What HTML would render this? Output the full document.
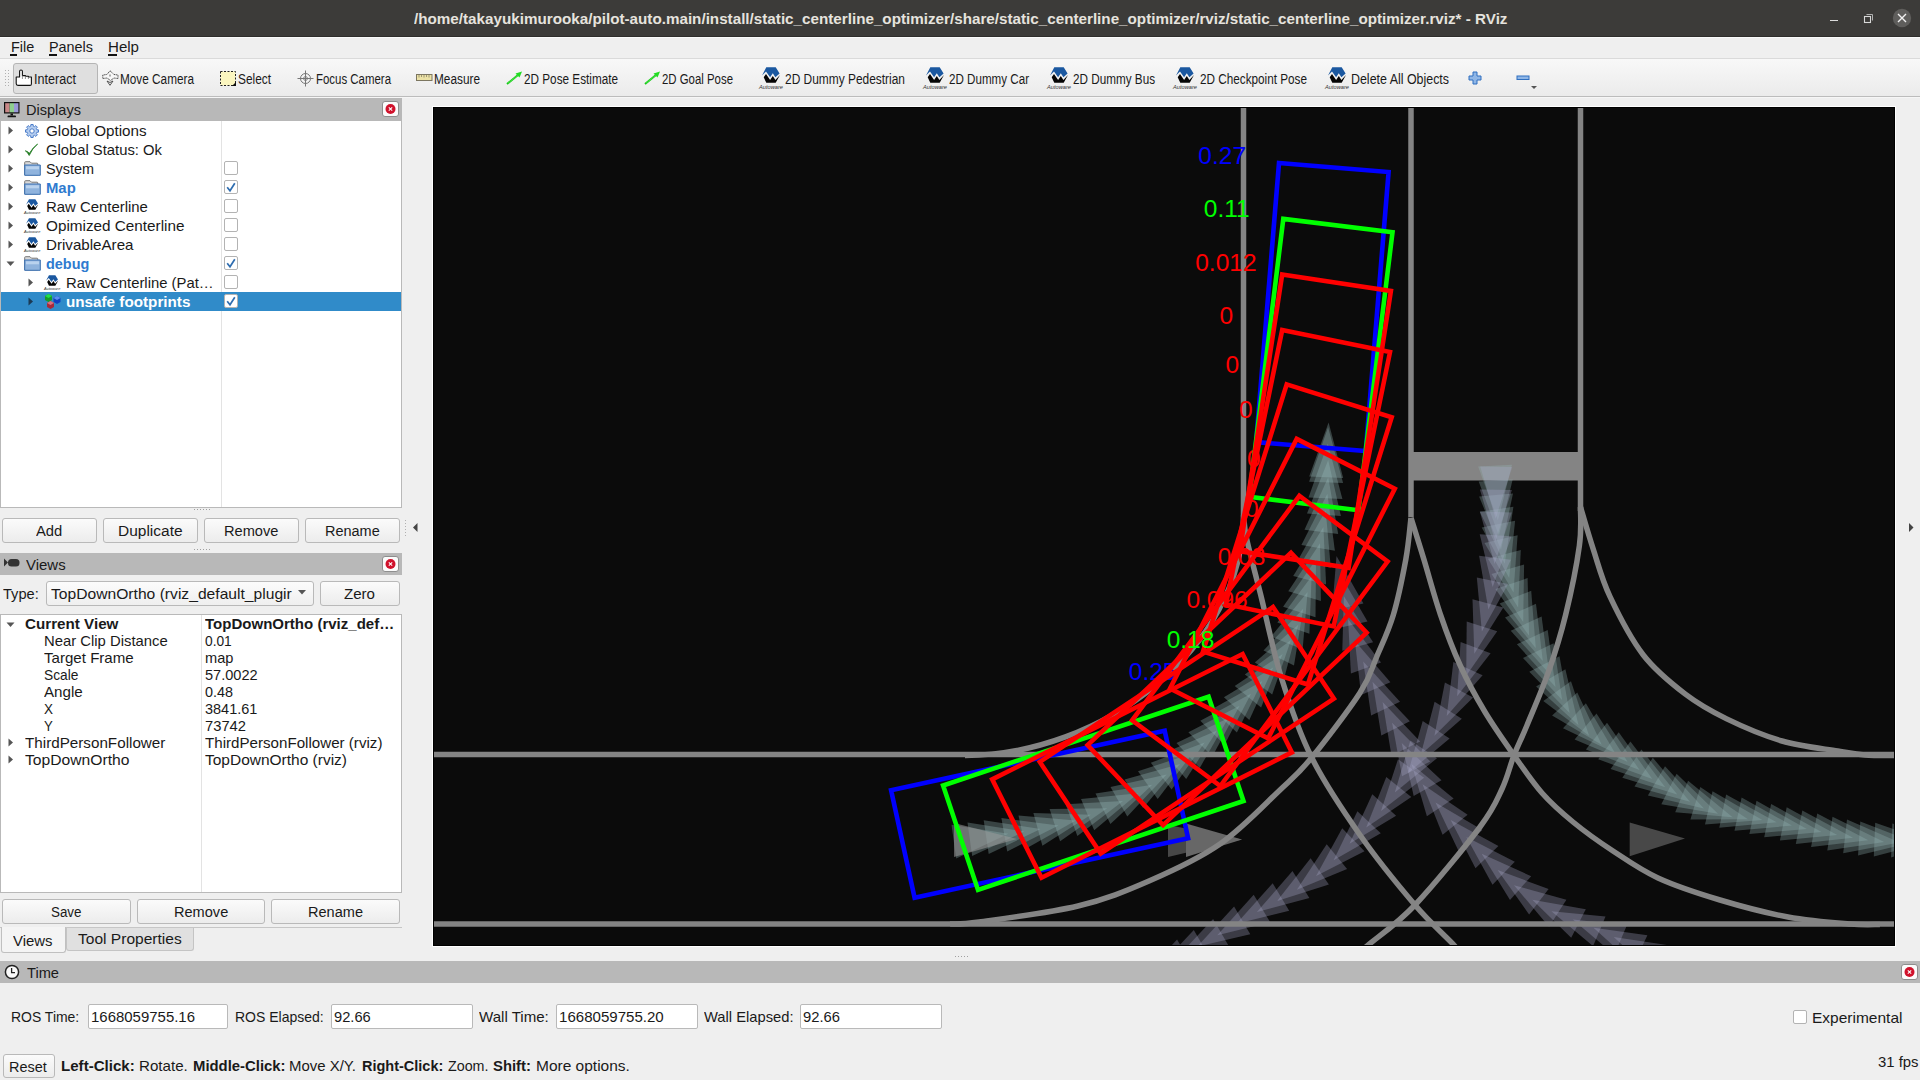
<!DOCTYPE html>
<html><head><meta charset="utf-8"><style>
*{margin:0;padding:0;box-sizing:border-box}
html,body{width:1920px;height:1080px;overflow:hidden;background:#efefef;font-family:"Liberation Sans",sans-serif}
.t{position:absolute;white-space:pre;transform-origin:0 0}
.r{position:absolute}
svg{position:absolute;overflow:visible}
</style></head><body>
<div class="r" style="left:0px;top:0px;width:1920px;height:37px;background:#3c3b39"></div>
<div class="r" style="left:0px;top:36px;width:1920px;height:1px;background:#2e2d2b"></div>
<div class="t" style="left:413.50px;top:11.18px;font-size:15.5px;line-height:15.5px;font-weight:bold;color:#e6e3de;transform:scaleX(0.9815);">/home/takayukimurooka/pilot-auto.main/install/static_centerline_optimizer/share/static_centerline_optimizer/rviz/static_centerline_optimizer.rviz* - RViz</div>
<div class="r" style="left:1830px;top:20px;width:8px;height:1.2px;background:#dcdcdc"></div>
<svg style="left:1860px;top:10px" width="16" height="16" viewBox="0 0 16 16"><rect x="4.5" y="6.5" width="6" height="6" fill="none" stroke="#d8d8d8" stroke-width="1.1"/><path d="M6.5 4.5 L12.5 4.5 L12.5 10.5" fill="none" stroke="#bdbdbd" stroke-width="0.9"/></svg>
<svg style="left:1892px;top:8px" width="20" height="20" viewBox="0 0 20 20"><circle cx="10" cy="10" r="9.2" fill="#5f5e5c"/><path d="M6 6 L14 14 M14 6 L6 14" stroke="#f2f2f2" stroke-width="1.4"/></svg>
<div class="r" style="left:0px;top:37px;width:1920px;height:1px;background:#fafafa"></div>
<div class="r" style="left:0px;top:38px;width:1920px;height:20px;background:#efefef"></div>
<div class="r" style="left:0px;top:58px;width:1920px;height:1px;background:#dadada"></div>
<div class="t" style="left:10.50px;top:40.32px;font-size:14.5px;line-height:14.5px;color:#1a1a1a;transform:scaleX(0.9951);">File</div>
<div class="r" style="left:10px;top:54px;width:7px;height:1.6px;background:#111"></div>
<div class="t" style="left:49.00px;top:40.32px;font-size:14.5px;line-height:14.5px;color:#1a1a1a;transform:scaleX(0.9924);">Panels</div>
<div class="r" style="left:49px;top:54px;width:8px;height:1.6px;background:#111"></div>
<div class="t" style="left:108.00px;top:40.32px;font-size:14.5px;line-height:14.5px;color:#1a1a1a;transform:scaleX(1.0395);">Help</div>
<div class="r" style="left:108px;top:54px;width:9px;height:1.6px;background:#111"></div>
<div class="r" style="left:0px;top:59px;width:1920px;height:37px;background:linear-gradient(#f8f8f8,#ebebeb)"></div>
<div class="r" style="left:0px;top:96px;width:1920px;height:1px;background:#bcbcbc"></div>
<div class="r" style="left:0px;top:97px;width:1920px;height:1px;background:#f6f6f6"></div>
<div class="r" style="left:5px;top:70px;width:1px;height:1px;background:#b0b0b0"></div>
<div class="r" style="left:8px;top:70px;width:1px;height:1px;background:#b0b0b0"></div>
<div class="r" style="left:5px;top:73px;width:1px;height:1px;background:#b0b0b0"></div>
<div class="r" style="left:8px;top:73px;width:1px;height:1px;background:#b0b0b0"></div>
<div class="r" style="left:5px;top:76px;width:1px;height:1px;background:#b0b0b0"></div>
<div class="r" style="left:8px;top:76px;width:1px;height:1px;background:#b0b0b0"></div>
<div class="r" style="left:5px;top:79px;width:1px;height:1px;background:#b0b0b0"></div>
<div class="r" style="left:8px;top:79px;width:1px;height:1px;background:#b0b0b0"></div>
<div class="r" style="left:5px;top:82px;width:1px;height:1px;background:#b0b0b0"></div>
<div class="r" style="left:8px;top:82px;width:1px;height:1px;background:#b0b0b0"></div>
<div class="r" style="left:5px;top:85px;width:1px;height:1px;background:#b0b0b0"></div>
<div class="r" style="left:8px;top:85px;width:1px;height:1px;background:#b0b0b0"></div>
<div class="r" style="left:13px;top:63px;width:84.5px;height:30.5px;background:#dfdfdf;border:1px solid #b5b5b5;border-radius:3px"></div>
<svg style="left:0;top:0" width="40" height="96" viewBox="0 0 40 96"><path d="M19.6 77 L19.6 71.2 Q19.6 70 21 70 Q22.4 70 22.4 71.2 L22.4 75.6 L25.4 75.6 L25.4 76.2 L28.4 76.2 L28.4 77 L31.4 77 L31.4 84 Q31.4 85.4 30 85.4 L18 85.4 Q16.2 85.4 16.2 83.6 L16.2 77 Z" fill="#fff" stroke="#111" stroke-width="1.1" stroke-linejoin="round"/><path d="M22.4 75.6 L22.4 79 M25.4 76.2 L25.4 79 M28.4 77 L28.4 79" stroke="#777" stroke-width="0.8"/></svg>
<div class="t" style="left:34.00px;top:72.05px;font-size:14px;line-height:14px;color:#1a1a1a;transform:scaleX(0.8996);">Interact</div>
<svg style="left:102px;top:70px" width="17" height="17" viewBox="0 0 17 17"><path d="M8 0.8 L12 4.5 L16 5 L16 8.5 L12 8 L8.5 10.5 L5 8 L0.8 8.5 L0.8 5 L5 4.5 Z" fill="#f7f7f7" stroke="#333" stroke-width="0.9" stroke-dasharray="1.2 0.6"/><path d="M5 11 L8 15.3 L11 11 L8 12.5Z" fill="#f7f7f7" stroke="#444" stroke-width="0.9"/><rect x="7" y="4.5" width="2" height="2" fill="#aaa"/></svg>
<div class="t" style="left:120.00px;top:72.05px;font-size:14px;line-height:14px;color:#1a1a1a;transform:scaleX(0.8417);">Move Camera</div>
<svg style="left:220px;top:71px" width="17" height="16" viewBox="0 0 17 16"><rect x="0.5" y="0.5" width="15" height="14" fill="#fbf6c0" stroke="#222" stroke-width="1" stroke-dasharray="2 1.5"/><path d="M12 15 L16 15 L16 11Z" fill="#111"/></svg>
<div class="t" style="left:238.00px;top:72.05px;font-size:14px;line-height:14px;color:#1a1a1a;transform:scaleX(0.8481);">Select</div>
<svg style="left:297px;top:70px" width="17" height="17" viewBox="0 0 17 17"><circle cx="8.5" cy="8.5" r="5" fill="#f3f3f3" stroke="#777" stroke-width="1"/><circle cx="8.5" cy="8.5" r="2" fill="none" stroke="#777" stroke-width="0.8"/><path d="M8.5 0.5 L8.5 16.5 M0.5 8.5 L16.5 8.5" stroke="#777" stroke-width="1"/></svg>
<div class="t" style="left:316.00px;top:72.05px;font-size:14px;line-height:14px;color:#1a1a1a;transform:scaleX(0.8169);">Focus Camera</div>
<svg style="left:416px;top:74px" width="17" height="8" viewBox="0 0 17 8"><rect x="0.5" y="0.5" width="15.5" height="6" fill="#ece2a6" stroke="#7c7660" stroke-width="1"/><path d="M3 1 L3 3.5 M5.5 1 L5.5 3 M8 1 L8 3.5 M10.5 1 L10.5 3 M13 1 L13 3.5" stroke="#7c7660" stroke-width="0.7"/></svg>
<div class="t" style="left:434.00px;top:72.05px;font-size:14px;line-height:14px;color:#1a1a1a;transform:scaleX(0.8445);">Measure</div>
<svg style="left:506px;top:70px" width="17" height="16" viewBox="0 0 17 16"><path d="M1 14 L12 5" stroke="#18c818" stroke-width="2"/><path d="M16 1.5 L9.5 3.5 L13.5 7.5Z" fill="#22dd22"/><path d="M2 13.2 L11.5 5.5" stroke="#55f055" stroke-width="0.7"/></svg>
<svg style="left:644px;top:70px" width="17" height="16" viewBox="0 0 17 16"><path d="M1 14 L12 5" stroke="#18c818" stroke-width="2"/><path d="M16 1.5 L9.5 3.5 L13.5 7.5Z" fill="#22dd22"/><path d="M2 13.2 L11.5 5.5" stroke="#55f055" stroke-width="0.7"/></svg>
<div class="t" style="left:524.00px;top:72.05px;font-size:14px;line-height:14px;color:#1a1a1a;transform:scaleX(0.8389);">2D Pose Estimate</div>
<div class="t" style="left:662.00px;top:72.05px;font-size:14px;line-height:14px;color:#1a1a1a;transform:scaleX(0.8146);">2D Goal Pose</div>
<svg style="left:759px;top:67px" width="24.0" height="22.0" viewBox="4 5 24 22">
<path d="M11.3 5.3 L20.7 5.3 L24.6 11.6 L20.4 15.3 L17.8 11.3 L15.1 15.3 L11 9.5 L7 13.4Z" fill="#1b58a0"/>
<path d="M8.7 15.3 L11 12.1 L15.1 17.9 L17.8 13.9 L20.4 17.9 L25 12.9 L20.7 20.7 L11.3 20.7Z" fill="#050505"/>
<text x="4" y="27" font-size="6" font-style="italic" textLength="24" lengthAdjust="spacingAndGlyphs" fill="#333" font-family="Liberation Sans">Autoware</text>
</svg>
<div class="t" style="left:785.00px;top:72.05px;font-size:14px;line-height:14px;color:#1a1a1a;transform:scaleX(0.8521);">2D Dummy Pedestrian</div>
<svg style="left:923px;top:67px" width="24.0" height="22.0" viewBox="4 5 24 22">
<path d="M11.3 5.3 L20.7 5.3 L24.6 11.6 L20.4 15.3 L17.8 11.3 L15.1 15.3 L11 9.5 L7 13.4Z" fill="#1b58a0"/>
<path d="M8.7 15.3 L11 12.1 L15.1 17.9 L17.8 13.9 L20.4 17.9 L25 12.9 L20.7 20.7 L11.3 20.7Z" fill="#050505"/>
<text x="4" y="27" font-size="6" font-style="italic" textLength="24" lengthAdjust="spacingAndGlyphs" fill="#333" font-family="Liberation Sans">Autoware</text>
</svg>
<div class="t" style="left:949.00px;top:72.05px;font-size:14px;line-height:14px;color:#1a1a1a;transform:scaleX(0.8294);">2D Dummy Car</div>
<svg style="left:1047px;top:67px" width="24.0" height="22.0" viewBox="4 5 24 22">
<path d="M11.3 5.3 L20.7 5.3 L24.6 11.6 L20.4 15.3 L17.8 11.3 L15.1 15.3 L11 9.5 L7 13.4Z" fill="#1b58a0"/>
<path d="M8.7 15.3 L11 12.1 L15.1 17.9 L17.8 13.9 L20.4 17.9 L25 12.9 L20.7 20.7 L11.3 20.7Z" fill="#050505"/>
<text x="4" y="27" font-size="6" font-style="italic" textLength="24" lengthAdjust="spacingAndGlyphs" fill="#333" font-family="Liberation Sans">Autoware</text>
</svg>
<div class="t" style="left:1073.00px;top:72.05px;font-size:14px;line-height:14px;color:#1a1a1a;transform:scaleX(0.8365);">2D Dummy Bus</div>
<svg style="left:1173px;top:67px" width="24.0" height="22.0" viewBox="4 5 24 22">
<path d="M11.3 5.3 L20.7 5.3 L24.6 11.6 L20.4 15.3 L17.8 11.3 L15.1 15.3 L11 9.5 L7 13.4Z" fill="#1b58a0"/>
<path d="M8.7 15.3 L11 12.1 L15.1 17.9 L17.8 13.9 L20.4 17.9 L25 12.9 L20.7 20.7 L11.3 20.7Z" fill="#050505"/>
<text x="4" y="27" font-size="6" font-style="italic" textLength="24" lengthAdjust="spacingAndGlyphs" fill="#333" font-family="Liberation Sans">Autoware</text>
</svg>
<div class="t" style="left:1200.00px;top:72.05px;font-size:14px;line-height:14px;color:#1a1a1a;transform:scaleX(0.8384);">2D Checkpoint Pose</div>
<svg style="left:1325px;top:67px" width="24.0" height="22.0" viewBox="4 5 24 22">
<path d="M11.3 5.3 L20.7 5.3 L24.6 11.6 L20.4 15.3 L17.8 11.3 L15.1 15.3 L11 9.5 L7 13.4Z" fill="#1b58a0"/>
<path d="M8.7 15.3 L11 12.1 L15.1 17.9 L17.8 13.9 L20.4 17.9 L25 12.9 L20.7 20.7 L11.3 20.7Z" fill="#050505"/>
<text x="4" y="27" font-size="6" font-style="italic" textLength="24" lengthAdjust="spacingAndGlyphs" fill="#333" font-family="Liberation Sans">Autoware</text>
</svg>
<div class="t" style="left:1351.00px;top:72.05px;font-size:14px;line-height:14px;color:#1a1a1a;transform:scaleX(0.8869);">Delete All Objects</div>
<svg style="left:1468px;top:71px" width="14" height="14" viewBox="0 0 14 14"><path d="M5 1 L9 1 L9 5 L13 5 L13 9 L9 9 L9 13 L5 13 L5 9 L1 9 L1 5 L5 5Z" fill="#8fb6e6" stroke="#2f6fc0" stroke-width="1"/></svg>
<svg style="left:1516px;top:75px" width="14" height="6" viewBox="0 0 14 6"><rect x="1" y="1" width="12" height="3.5" fill="#8fb6e6" stroke="#2f6fc0" stroke-width="1"/></svg>
<svg style="left:1531px;top:86px" width="6" height="4" viewBox="0 0 6 4"><path d="M0 0 L6 0 L3 3Z" fill="#555"/></svg>
<div class="r" style="left:0px;top:98px;width:402px;height:23px;background:#b8b8b8"></div>
<svg style="left:3px;top:101px" width="18" height="18" viewBox="0 0 18 18"><rect x="1" y="1" width="15.5" height="11.5" fill="#111"/><rect x="2.2" y="2.2" width="4.4" height="9.1" fill="#c98888"/><rect x="6.6" y="2.2" width="4.4" height="9.1" fill="#8fcf8f"/><rect x="11" y="2.2" width="4.4" height="9.1" fill="#9a9ad8"/><rect x="7.5" y="12.5" width="2.5" height="2" fill="#111"/><rect x="4.5" y="14.5" width="8.5" height="1.8" rx="0.9" fill="#111"/></svg>
<div class="t" style="left:26.00px;top:102.92px;font-size:14.5px;line-height:14.5px;color:#1a1a1a;transform:scaleX(1.0038);">Displays</div>
<svg style="left:382px;top:101px" width="17" height="16" viewBox="0 0 17 16">
<rect x="0.5" y="0.5" width="16" height="15" rx="2.5" fill="#fbfbfb" stroke="#8e8e8e"/>
<circle cx="8.5" cy="8" r="5" fill="#d0112b"/>
<path d="M6.8 6.3 L10.2 9.7 M10.2 6.3 L6.8 9.7" stroke="#fff" stroke-width="1.05"/>
</svg>
<div class="r" style="left:0px;top:121px;width:402px;height:387px;background:#fff;border:1px solid #b9b9b9;border-top:none"></div>
<div class="r" style="left:221px;top:121px;width:1px;height:386px;background:#e3e3e3"></div>
<svg style="left:8px;top:126px" width="6" height="9" viewBox="0 0 6 9"><path d="M0.5 0.5 L5 4.5 L0.5 8.5Z" fill="#555"/></svg>
<svg style="left:24px;top:123px" width="16" height="16" viewBox="0 0 16 16"><path d="M12.83 6.72 L14.50 6.87 L14.50 9.13 L12.83 9.28 L12.32 10.51 L13.40 11.80 L11.80 13.40 L10.51 12.32 L9.28 12.83 L9.13 14.50 L6.87 14.50 L6.72 12.83 L5.49 12.32 L4.20 13.40 L2.60 11.80 L3.68 10.51 L3.17 9.28 L1.50 9.13 L1.50 6.87 L3.17 6.72 L3.68 5.49 L2.60 4.20 L4.20 2.60 L5.49 3.68 L6.72 3.17 L6.87 1.50 L9.13 1.50 L9.28 3.17 L10.51 3.68 L11.80 2.60 L13.40 4.20 L12.32 5.49Z" fill="#b5cdef" stroke="#3c72c4" stroke-width="0.9" stroke-linejoin="round"/><circle cx="8" cy="8" r="2.2" fill="#fff" stroke="#3c72c4" stroke-width="0.9"/></svg>
<div class="t" style="left:46.40px;top:123.72px;font-size:14.5px;line-height:14.5px;color:#1a1a1a;transform:scaleX(1.0488);">Global Options</div>
<svg style="left:8px;top:145px" width="6" height="9" viewBox="0 0 6 9"><path d="M0.5 0.5 L5 4.5 L0.5 8.5Z" fill="#555"/></svg>
<svg style="left:24px;top:142px" width="16" height="16" viewBox="0 0 16 16"><path d="M1.3 8.8 Q3.5 10 5.2 13.5 Q8.5 6 13.6 2 Q8.8 5.5 5.4 11.3 Q4 9.3 1.3 8.8Z" fill="#1f7a1f" stroke="#1f7a1f" stroke-width="0.8" stroke-linejoin="round"/></svg>
<div class="t" style="left:46.40px;top:142.72px;font-size:14.5px;line-height:14.5px;color:#1a1a1a;transform:scaleX(1.0199);">Global Status: Ok</div>
<svg style="left:8px;top:164px" width="6" height="9" viewBox="0 0 6 9"><path d="M0.5 0.5 L5 4.5 L0.5 8.5Z" fill="#555"/></svg>
<svg style="left:24px;top:161px" width="17" height="15" viewBox="0 0 17 15">
<path d="M0.7 1.5 Q0.7 0.7 1.5 0.7 L6 0.7 L7.5 2.2 L13 2.2 Q13.8 2.2 13.8 3 L13.8 13.8 L0.7 13.8 Z" fill="#d9d9d9" stroke="#777" stroke-width="1"/>
<path d="M0.7 4 L16.3 4 L16.3 14.3 L0.7 14.3 Z" fill="#8fb3dd" stroke="#3a6fb0" stroke-width="1"/>
<rect x="2" y="5.3" width="13" height="3" fill="#b9d2ee"/>
</svg>
<div class="t" style="left:46.40px;top:161.72px;font-size:14.5px;line-height:14.5px;color:#1a1a1a;transform:scaleX(0.9950);">System</div>
<div class="r" style="left:224px;top:161px;width:14px;height:14px;background:#fff;border:1px solid #b3b3b3;border-radius:2px"></div>
<svg style="left:8px;top:183px" width="6" height="9" viewBox="0 0 6 9"><path d="M0.5 0.5 L5 4.5 L0.5 8.5Z" fill="#555"/></svg>
<svg style="left:24px;top:180px" width="17" height="15" viewBox="0 0 17 15">
<path d="M0.7 1.5 Q0.7 0.7 1.5 0.7 L6 0.7 L7.5 2.2 L13 2.2 Q13.8 2.2 13.8 3 L13.8 13.8 L0.7 13.8 Z" fill="#d9d9d9" stroke="#777" stroke-width="1"/>
<path d="M0.7 4 L16.3 4 L16.3 14.3 L0.7 14.3 Z" fill="#8fb3dd" stroke="#3a6fb0" stroke-width="1"/>
<rect x="2" y="5.3" width="13" height="3" fill="#b9d2ee"/>
</svg>
<div class="t" style="left:46.40px;top:180.72px;font-size:14.5px;line-height:14.5px;font-weight:bold;color:#2f7bcf;transform:scaleX(1.0241);">Map</div>
<div class="r" style="left:224px;top:180px;width:14px;height:14px;background:#fff;border:1px solid #b3b3b3;border-radius:2px"></div>
<svg style="left:224px;top:180px" width="14" height="14" viewBox="0 0 14 14"><path d="M3.2 7.2 L6 10.8 L10.8 3.2" fill="none" stroke="#2e6db0" stroke-width="1.7"/></svg>
<svg style="left:8px;top:202px" width="6" height="9" viewBox="0 0 6 9"><path d="M0.5 0.5 L5 4.5 L0.5 8.5Z" fill="#555"/></svg>
<svg style="left:24px;top:199px" width="16.3" height="15.0" viewBox="4 5 24 22">
<path d="M11.3 5.3 L20.7 5.3 L24.6 11.6 L20.4 15.3 L17.8 11.3 L15.1 15.3 L11 9.5 L7 13.4Z" fill="#1b58a0"/>
<path d="M8.7 15.3 L11 12.1 L15.1 17.9 L17.8 13.9 L20.4 17.9 L25 12.9 L20.7 20.7 L11.3 20.7Z" fill="#050505"/>
<text x="4" y="27" font-size="6" font-style="italic" textLength="24" lengthAdjust="spacingAndGlyphs" fill="#333" font-family="Liberation Sans">Autoware</text>
</svg>
<div class="t" style="left:46.40px;top:199.72px;font-size:14.5px;line-height:14.5px;color:#1a1a1a;transform:scaleX(1.0279);">Raw Centerline</div>
<div class="r" style="left:224px;top:199px;width:14px;height:14px;background:#fff;border:1px solid #b3b3b3;border-radius:2px"></div>
<svg style="left:8px;top:221px" width="6" height="9" viewBox="0 0 6 9"><path d="M0.5 0.5 L5 4.5 L0.5 8.5Z" fill="#555"/></svg>
<svg style="left:24px;top:218px" width="16.3" height="15.0" viewBox="4 5 24 22">
<path d="M11.3 5.3 L20.7 5.3 L24.6 11.6 L20.4 15.3 L17.8 11.3 L15.1 15.3 L11 9.5 L7 13.4Z" fill="#1b58a0"/>
<path d="M8.7 15.3 L11 12.1 L15.1 17.9 L17.8 13.9 L20.4 17.9 L25 12.9 L20.7 20.7 L11.3 20.7Z" fill="#050505"/>
<text x="4" y="27" font-size="6" font-style="italic" textLength="24" lengthAdjust="spacingAndGlyphs" fill="#333" font-family="Liberation Sans">Autoware</text>
</svg>
<div class="t" style="left:46.40px;top:218.72px;font-size:14.5px;line-height:14.5px;color:#1a1a1a;transform:scaleX(1.0543);">Opimized Centerline</div>
<div class="r" style="left:224px;top:218px;width:14px;height:14px;background:#fff;border:1px solid #b3b3b3;border-radius:2px"></div>
<svg style="left:8px;top:240px" width="6" height="9" viewBox="0 0 6 9"><path d="M0.5 0.5 L5 4.5 L0.5 8.5Z" fill="#555"/></svg>
<svg style="left:24px;top:237px" width="16.3" height="15.0" viewBox="4 5 24 22">
<path d="M11.3 5.3 L20.7 5.3 L24.6 11.6 L20.4 15.3 L17.8 11.3 L15.1 15.3 L11 9.5 L7 13.4Z" fill="#1b58a0"/>
<path d="M8.7 15.3 L11 12.1 L15.1 17.9 L17.8 13.9 L20.4 17.9 L25 12.9 L20.7 20.7 L11.3 20.7Z" fill="#050505"/>
<text x="4" y="27" font-size="6" font-style="italic" textLength="24" lengthAdjust="spacingAndGlyphs" fill="#333" font-family="Liberation Sans">Autoware</text>
</svg>
<div class="t" style="left:46.40px;top:237.72px;font-size:14.5px;line-height:14.5px;color:#1a1a1a;transform:scaleX(1.0439);">DrivableArea</div>
<div class="r" style="left:224px;top:237px;width:14px;height:14px;background:#fff;border:1px solid #b3b3b3;border-radius:2px"></div>
<svg style="left:6px;top:261px" width="9" height="6" viewBox="0 0 9 6"><path d="M0.5 0.5 L8.5 0.5 L4.5 5Z" fill="#555"/></svg>
<svg style="left:24px;top:256px" width="17" height="15" viewBox="0 0 17 15">
<path d="M0.7 1.5 Q0.7 0.7 1.5 0.7 L6 0.7 L7.5 2.2 L13 2.2 Q13.8 2.2 13.8 3 L13.8 13.8 L0.7 13.8 Z" fill="#d9d9d9" stroke="#777" stroke-width="1"/>
<path d="M0.7 4 L16.3 4 L16.3 14.3 L0.7 14.3 Z" fill="#8fb3dd" stroke="#3a6fb0" stroke-width="1"/>
<rect x="2" y="5.3" width="13" height="3" fill="#b9d2ee"/>
</svg>
<div class="t" style="left:46.40px;top:256.72px;font-size:14.5px;line-height:14.5px;font-weight:bold;color:#2f7bcf;transform:scaleX(0.9955);">debug</div>
<div class="r" style="left:224px;top:256px;width:14px;height:14px;background:#fff;border:1px solid #b3b3b3;border-radius:2px"></div>
<svg style="left:224px;top:256px" width="14" height="14" viewBox="0 0 14 14"><path d="M3.2 7.2 L6 10.8 L10.8 3.2" fill="none" stroke="#2e6db0" stroke-width="1.7"/></svg>
<svg style="left:28px;top:278px" width="6" height="9" viewBox="0 0 6 9"><path d="M0.5 0.5 L5 4.5 L0.5 8.5Z" fill="#555"/></svg>
<svg style="left:44px;top:275px" width="16.3" height="15.0" viewBox="4 5 24 22">
<path d="M11.3 5.3 L20.7 5.3 L24.6 11.6 L20.4 15.3 L17.8 11.3 L15.1 15.3 L11 9.5 L7 13.4Z" fill="#1b58a0"/>
<path d="M8.7 15.3 L11 12.1 L15.1 17.9 L17.8 13.9 L20.4 17.9 L25 12.9 L20.7 20.7 L11.3 20.7Z" fill="#050505"/>
<text x="4" y="27" font-size="6" font-style="italic" textLength="24" lengthAdjust="spacingAndGlyphs" fill="#333" font-family="Liberation Sans">Autoware</text>
</svg>
<div class="t" style="left:66.40px;top:275.72px;font-size:14.5px;line-height:14.5px;color:#1a1a1a;transform:scaleX(1.0232);">Raw Centerline (Pat…</div>
<div class="r" style="left:224px;top:275px;width:14px;height:14px;background:#fff;border:1px solid #b3b3b3;border-radius:2px"></div>
<div class="r" style="left:1px;top:292px;width:400px;height:19px;background:#308bc9"></div>
<svg style="left:28px;top:297px" width="6" height="9" viewBox="0 0 6 9"><path d="M0.5 0.5 L5 4.5 L0.5 8.5Z" fill="#1b3a55"/></svg>
<svg style="left:44px;top:293px" width="17" height="18" viewBox="0 0 17 18">
<path d="M1 3 L4.5 1 L8 3 L8 7 L4.5 9 L1 7Z" fill="#159a2a"/><path d="M1 3 L4.5 1 L8 3 L4.5 5Z" fill="#1fe04a"/>
<path d="M9.5 5 L13 3 L16.5 5 L16.5 9 L13 11 L9.5 9Z" fill="#1040c0"/><path d="M9.5 5 L13 3 L16.5 5 L13 7Z" fill="#5a8ef0"/>
<path d="M3 10 L6.5 8 L10 10 L10 14 L6.5 16 L3 14Z" fill="#a82a3a"/><path d="M3 10 L6.5 8 L10 10 L6.5 12Z" fill="#d87080"/>
</svg>
<div class="t" style="left:66.40px;top:294.72px;font-size:14.5px;line-height:14.5px;font-weight:bold;color:#ffffff;transform:scaleX(1.0505);">unsafe footprints</div>
<div class="r" style="left:224px;top:294px;width:14px;height:14px;background:#fff;border:1px solid #b3b3b3;border-radius:2px"></div>
<svg style="left:224px;top:294px" width="14" height="14" viewBox="0 0 14 14"><path d="M3.2 7.2 L6 10.8 L10.8 3.2" fill="none" stroke="#2e6db0" stroke-width="1.7"/></svg>
<div class="r" style="left:194px;top:509px;width:1px;height:1px;background:#a0a0a0"></div>
<div class="r" style="left:197px;top:509px;width:1px;height:1px;background:#a0a0a0"></div>
<div class="r" style="left:200px;top:509px;width:1px;height:1px;background:#a0a0a0"></div>
<div class="r" style="left:203px;top:509px;width:1px;height:1px;background:#a0a0a0"></div>
<div class="r" style="left:206px;top:509px;width:1px;height:1px;background:#a0a0a0"></div>
<div class="r" style="left:209px;top:509px;width:1px;height:1px;background:#a0a0a0"></div>
<div class="r" style="left:2px;top:518px;width:95px;height:25px;background:linear-gradient(#fbfbfb,#ececec);border:1px solid #b9b9b9;border-radius:3px"></div>
<div class="t" style="left:36.00px;top:524.15px;font-size:14px;line-height:14px;color:#1a1a1a;transform:scaleX(1.0557);">Add</div>
<div class="r" style="left:103px;top:518px;width:95px;height:25px;background:linear-gradient(#fbfbfb,#ececec);border:1px solid #b9b9b9;border-radius:3px"></div>
<div class="t" style="left:118.00px;top:524.15px;font-size:14px;line-height:14px;color:#1a1a1a;transform:scaleX(1.1068);">Duplicate</div>
<div class="r" style="left:204px;top:518px;width:95px;height:25px;background:linear-gradient(#fbfbfb,#ececec);border:1px solid #b9b9b9;border-radius:3px"></div>
<div class="t" style="left:224.00px;top:524.15px;font-size:14px;line-height:14px;color:#1a1a1a;transform:scaleX(1.0435);">Remove</div>
<div class="r" style="left:305px;top:518px;width:95px;height:25px;background:linear-gradient(#fbfbfb,#ececec);border:1px solid #b9b9b9;border-radius:3px"></div>
<div class="t" style="left:325.00px;top:524.15px;font-size:14px;line-height:14px;color:#1a1a1a;transform:scaleX(1.0337);">Rename</div>
<div class="r" style="left:194px;top:549px;width:1px;height:1px;background:#a0a0a0"></div>
<div class="r" style="left:197px;top:549px;width:1px;height:1px;background:#a0a0a0"></div>
<div class="r" style="left:200px;top:549px;width:1px;height:1px;background:#a0a0a0"></div>
<div class="r" style="left:203px;top:549px;width:1px;height:1px;background:#a0a0a0"></div>
<div class="r" style="left:206px;top:549px;width:1px;height:1px;background:#a0a0a0"></div>
<div class="r" style="left:209px;top:549px;width:1px;height:1px;background:#a0a0a0"></div>
<div class="r" style="left:405px;top:520px;width:1px;height:1px;background:#b0b0b0"></div>
<div class="r" style="left:405px;top:523px;width:1px;height:1px;background:#b0b0b0"></div>
<div class="r" style="left:405px;top:526px;width:1px;height:1px;background:#b0b0b0"></div>
<div class="r" style="left:405px;top:529px;width:1px;height:1px;background:#b0b0b0"></div>
<div class="r" style="left:405px;top:532px;width:1px;height:1px;background:#b0b0b0"></div>
<div class="r" style="left:405px;top:535px;width:1px;height:1px;background:#b0b0b0"></div>
<svg style="left:413px;top:523px" width="5" height="9" viewBox="0 0 5 9"><path d="M4.5 0 L0 4.5 L4.5 9Z" fill="#444"/></svg>
<svg style="left:1909px;top:523px" width="5" height="9" viewBox="0 0 5 9"><path d="M0 0 L4.5 4.5 L0 9Z" fill="#444"/></svg>
<div class="r" style="left:0px;top:553px;width:402px;height:22px;background:#b8b8b8"></div>
<svg style="left:3px;top:557px" width="18" height="12" viewBox="0 0 18 12"><path d="M1 1.5 L5 5.5 L1 9.5Z" fill="#333"/><rect x="5" y="2" width="11.5" height="7.5" rx="3.5" fill="#333"/></svg>
<div class="t" style="left:26.40px;top:557.52px;font-size:14.5px;line-height:14.5px;color:#1a1a1a;transform:scaleX(1.0308);">Views</div>
<svg style="left:382px;top:556px" width="17" height="16" viewBox="0 0 17 16">
<rect x="0.5" y="0.5" width="16" height="15" rx="2.5" fill="#fbfbfb" stroke="#8e8e8e"/>
<circle cx="8.5" cy="8" r="5" fill="#d0112b"/>
<path d="M6.8 6.3 L10.2 9.7 M10.2 6.3 L6.8 9.7" stroke="#fff" stroke-width="1.05"/>
</svg>
<div class="t" style="left:2.75px;top:586.92px;font-size:14.5px;line-height:14.5px;color:#1a1a1a;transform:scaleX(1.0080);">Type:</div>
<div class="r" style="left:45.5px;top:581px;width:268px;height:25px;background:linear-gradient(#fcfcfc,#efefef);border:1px solid #b9b9b9;border-radius:3px"></div>
<div class="t" style="left:50.90px;top:586.92px;font-size:14.5px;line-height:14.5px;color:#1a1a1a;transform:scaleX(1.0786);">TopDownOrtho (rviz_default_plugir</div>
<svg style="left:298px;top:590px" width="8" height="5" viewBox="0 0 8 5"><path d="M0 0 L8 0 L4 4.5Z" fill="#555"/></svg>
<div class="r" style="left:320px;top:581px;width:80px;height:25px;background:linear-gradient(#fbfbfb,#ececec);border:1px solid #b9b9b9;border-radius:3px"></div>
<div class="t" style="left:344.00px;top:587.35px;font-size:14px;line-height:14px;color:#1a1a1a;transform:scaleX(1.0769);">Zero</div>
<div class="r" style="left:0px;top:614px;width:402px;height:279px;background:#fff;border:1px solid #b9b9b9"></div>
<div class="r" style="left:201px;top:615px;width:1px;height:277px;background:#e3e3e3"></div>
<svg style="left:6px;top:622px" width="9" height="6" viewBox="0 0 9 6"><path d="M0.5 0.5 L8.5 0.5 L4.5 5Z" fill="#555"/></svg>
<div class="t" style="left:24.50px;top:616.78px;font-size:14.2px;line-height:14.2px;font-weight:bold;color:#1a1a1a;transform:scaleX(1.0707);">Current View</div>
<div class="t" style="left:204.60px;top:616.78px;font-size:14.2px;line-height:14.2px;font-weight:bold;color:#1a1a1a;transform:scaleX(1.0592);">TopDownOrtho (rviz_def…</div>
<div class="t" style="left:44.20px;top:633.78px;font-size:14.2px;line-height:14.2px;color:#1a1a1a;transform:scaleX(1.0458);">Near Clip Distance</div>
<div class="t" style="left:204.60px;top:633.78px;font-size:14.2px;line-height:14.2px;color:#1a1a1a;transform:scaleX(0.9697);">0.01</div>
<div class="t" style="left:44.20px;top:650.78px;font-size:14.2px;line-height:14.2px;color:#1a1a1a;transform:scaleX(1.0635);">Target Frame</div>
<div class="t" style="left:204.60px;top:650.78px;font-size:14.2px;line-height:14.2px;color:#1a1a1a;transform:scaleX(1.0281);">map</div>
<div class="t" style="left:44.20px;top:667.78px;font-size:14.2px;line-height:14.2px;color:#1a1a1a;transform:scaleX(0.9684);">Scale</div>
<div class="t" style="left:204.60px;top:667.78px;font-size:14.2px;line-height:14.2px;color:#1a1a1a;transform:scaleX(1.0267);">57.0022</div>
<div class="t" style="left:44.20px;top:684.78px;font-size:14.2px;line-height:14.2px;color:#1a1a1a;transform:scaleX(1.0683);">Angle</div>
<div class="t" style="left:204.60px;top:684.78px;font-size:14.2px;line-height:14.2px;color:#1a1a1a;transform:scaleX(1.0131);">0.48</div>
<div class="t" style="left:44.20px;top:701.78px;font-size:14.2px;line-height:14.2px;color:#1a1a1a;transform:scaleX(0.9502);">X</div>
<div class="t" style="left:204.60px;top:701.78px;font-size:14.2px;line-height:14.2px;color:#1a1a1a;transform:scaleX(1.0208);">3841.61</div>
<div class="t" style="left:44.20px;top:718.78px;font-size:14.2px;line-height:14.2px;color:#1a1a1a;transform:scaleX(0.9291);">Y</div>
<div class="t" style="left:204.60px;top:718.78px;font-size:14.2px;line-height:14.2px;color:#1a1a1a;transform:scaleX(1.0383);">73742</div>
<svg style="left:8px;top:738px" width="6" height="9" viewBox="0 0 6 9"><path d="M0.5 0.5 L5 4.5 L0.5 8.5Z" fill="#555"/></svg>
<div class="t" style="left:24.50px;top:735.78px;font-size:14.2px;line-height:14.2px;color:#1a1a1a;transform:scaleX(1.0724);">ThirdPersonFollower</div>
<div class="t" style="left:204.60px;top:735.78px;font-size:14.2px;line-height:14.2px;color:#1a1a1a;transform:scaleX(1.0667);">ThirdPersonFollower (rviz)</div>
<svg style="left:8px;top:755px" width="6" height="9" viewBox="0 0 6 9"><path d="M0.5 0.5 L5 4.5 L0.5 8.5Z" fill="#555"/></svg>
<div class="t" style="left:24.50px;top:752.78px;font-size:14.2px;line-height:14.2px;color:#1a1a1a;transform:scaleX(1.1033);">TopDownOrtho</div>
<div class="t" style="left:204.60px;top:752.78px;font-size:14.2px;line-height:14.2px;color:#1a1a1a;transform:scaleX(1.0914);">TopDownOrtho (rviz)</div>
<div class="r" style="left:2px;top:899px;width:129px;height:25px;background:linear-gradient(#fbfbfb,#ececec);border:1px solid #b9b9b9;border-radius:3px"></div>
<div class="t" style="left:50.75px;top:905.15px;font-size:14px;line-height:14px;color:#1a1a1a;transform:scaleX(0.9558);">Save</div>
<div class="r" style="left:137px;top:899px;width:128px;height:25px;background:linear-gradient(#fbfbfb,#ececec);border:1px solid #b9b9b9;border-radius:3px"></div>
<div class="t" style="left:173.75px;top:905.15px;font-size:14px;line-height:14px;color:#1a1a1a;transform:scaleX(1.0406);">Remove</div>
<div class="r" style="left:271px;top:899px;width:129px;height:25px;background:linear-gradient(#fbfbfb,#ececec);border:1px solid #b9b9b9;border-radius:3px"></div>
<div class="t" style="left:307.50px;top:905.15px;font-size:14px;line-height:14px;color:#1a1a1a;transform:scaleX(1.0393);">Rename</div>
<div class="r" style="left:0px;top:927px;width:402px;height:1px;background:#c6c6c6"></div>
<div class="r" style="left:65.5px;top:928px;width:128px;height:23px;background:#e0e0e0;border:1px solid #c4c4c4;border-top:none;border-radius:0 0 3px 3px"></div>
<div class="r" style="left:1px;top:927px;width:65px;height:26px;background:#f4f4f4;border:1px solid #c0c0c0;border-top:none;border-radius:0 0 3px 3px"></div>
<div class="t" style="left:12.50px;top:933.52px;font-size:14.5px;line-height:14.5px;color:#1a1a1a;transform:scaleX(1.0282);">Views</div>
<div class="t" style="left:77.50px;top:932.22px;font-size:14.5px;line-height:14.5px;color:#1a1a1a;transform:scaleX(1.0727);">Tool Properties</div>
<div class="r" style="left:955px;top:956px;width:1px;height:1px;background:#a0a0a0"></div>
<div class="r" style="left:958px;top:956px;width:1px;height:1px;background:#a0a0a0"></div>
<div class="r" style="left:961px;top:956px;width:1px;height:1px;background:#a0a0a0"></div>
<div class="r" style="left:964px;top:956px;width:1px;height:1px;background:#a0a0a0"></div>
<div class="r" style="left:967px;top:956px;width:1px;height:1px;background:#a0a0a0"></div>
<div class="r" style="left:0px;top:961px;width:1920px;height:22px;background:#b8b8b8"></div>
<svg style="left:4px;top:964px" width="16" height="16" viewBox="0 0 16 16"><circle cx="8" cy="8" r="6.6" fill="#fafafa" stroke="#222" stroke-width="1.5"/><path d="M7.6 4 L7.6 8.6 L11 8.6" fill="none" stroke="#222" stroke-width="1.3"/></svg>
<div class="t" style="left:26.75px;top:965.72px;font-size:14.5px;line-height:14.5px;color:#1a1a1a;transform:scaleX(1.0099);">Time</div>
<svg style="left:1901px;top:964px" width="17" height="16" viewBox="0 0 17 16">
<rect x="0.5" y="0.5" width="16" height="15" rx="2.5" fill="#fbfbfb" stroke="#8e8e8e"/>
<circle cx="8.5" cy="8" r="5" fill="#d0112b"/>
<path d="M6.8 6.3 L10.2 9.7 M10.2 6.3 L6.8 9.7" stroke="#fff" stroke-width="1.05"/>
</svg>
<div class="t" style="left:11.25px;top:1010.22px;font-size:14.5px;line-height:14.5px;color:#1a1a1a;transform:scaleX(0.9626);">ROS Time:</div>
<div class="r" style="left:87.5px;top:1004px;width:140.5px;height:25px;background:#fff;border:1px solid #b9b9b9;border-radius:2px"></div>
<div class="t" style="left:90.50px;top:1009.52px;font-size:14.5px;line-height:14.5px;color:#1a1a1a;transform:scaleX(1.0317);">1668059755.16</div>
<div class="t" style="left:235.00px;top:1010.22px;font-size:14.5px;line-height:14.5px;color:#1a1a1a;transform:scaleX(0.9659);">ROS Elapsed:</div>
<div class="r" style="left:331px;top:1004px;width:141.5px;height:25px;background:#fff;border:1px solid #b9b9b9;border-radius:2px"></div>
<div class="t" style="left:334.00px;top:1009.52px;font-size:14.5px;line-height:14.5px;color:#1a1a1a;transform:scaleX(1.0128);">92.66</div>
<div class="t" style="left:479.00px;top:1010.22px;font-size:14.5px;line-height:14.5px;color:#1a1a1a;transform:scaleX(1.0397);">Wall Time:</div>
<div class="r" style="left:556px;top:1004px;width:141.5px;height:25px;background:#fff;border:1px solid #b9b9b9;border-radius:2px"></div>
<div class="t" style="left:559.00px;top:1009.52px;font-size:14.5px;line-height:14.5px;color:#1a1a1a;transform:scaleX(1.0387);">1668059755.20</div>
<div class="t" style="left:704.00px;top:1010.22px;font-size:14.5px;line-height:14.5px;color:#1a1a1a;transform:scaleX(1.0157);">Wall Elapsed:</div>
<div class="r" style="left:800px;top:1004px;width:141.70000000000005px;height:25px;background:#fff;border:1px solid #b9b9b9;border-radius:2px"></div>
<div class="t" style="left:803.00px;top:1009.52px;font-size:14.5px;line-height:14.5px;color:#1a1a1a;transform:scaleX(1.0197);">92.66</div>
<div class="r" style="left:1793px;top:1010px;width:14px;height:14px;background:#fff;border:1px solid #b3b3b3;border-radius:2px"></div>
<div class="t" style="left:1812.00px;top:1010.52px;font-size:14.5px;line-height:14.5px;color:#1a1a1a;transform:scaleX(1.0694);">Experimental</div>
<div class="r" style="left:2.5px;top:1054px;width:52.0px;height:24px;background:linear-gradient(#fbfbfb,#ececec);border:1px solid #b9b9b9;border-radius:3px"></div>
<div class="t" style="left:9.25px;top:1060.15px;font-size:14px;line-height:14px;color:#1a1a1a;transform:scaleX(1.0322);">Reset</div>
<div class="t" style="left:61.25px;top:1059.32px;font-size:14.5px;line-height:14.5px;font-weight:bold;color:#1a1a1a;transform:scaleX(1.0403);">Left-Click:</div>
<div class="t" style="left:138.75px;top:1059.32px;font-size:14.5px;line-height:14.5px;color:#1a1a1a;transform:scaleX(1.0428);">Rotate.</div>
<div class="t" style="left:192.50px;top:1059.32px;font-size:14.5px;line-height:14.5px;font-weight:bold;color:#1a1a1a;transform:scaleX(1.0251);">Middle-Click:</div>
<div class="t" style="left:289.00px;top:1059.32px;font-size:14.5px;line-height:14.5px;color:#1a1a1a;transform:scaleX(1.0305);">Move X/Y.</div>
<div class="t" style="left:361.75px;top:1059.32px;font-size:14.5px;line-height:14.5px;font-weight:bold;color:#1a1a1a;transform:scaleX(0.9987);">Right-Click:</div>
<div class="t" style="left:447.50px;top:1059.32px;font-size:14.5px;line-height:14.5px;color:#1a1a1a;transform:scaleX(0.9855);">Zoom.</div>
<div class="t" style="left:493.40px;top:1059.32px;font-size:14.5px;line-height:14.5px;font-weight:bold;color:#1a1a1a;transform:scaleX(1.0231);">Shift:</div>
<div class="t" style="left:535.70px;top:1059.32px;font-size:14.5px;line-height:14.5px;color:#1a1a1a;transform:scaleX(1.0688);">More options.</div>
<div class="t" style="left:1877.50px;top:1055.22px;font-size:14.5px;line-height:14.5px;color:#1a1a1a;transform:scaleX(1.0253);">31 fps</div>
<div class="r" style="left:432px;top:106px;width:1464px;height:841px;background:#fff"></div>
<div class="r" style="left:433px;top:107px;width:1462px;height:839px;background:#0b0b0b;border:1px solid #000"></div>
<svg style="left:0;top:0" width="1920" height="1080" viewBox="0 0 1920 1080"><defs><clipPath id="vc"><rect x="434" y="108" width="1460" height="837"/></clipPath></defs><g clip-path="url(#vc)">
<rect x="1411" y="452" width="169.5" height="28.5" fill="#848484"/>
<path d="M956.2 858.4 L951.5 824.8 L1008.3 833.8Z" fill="#98baba" fill-opacity="0.32"/>
<path d="M972.2 856.1 L967.5 822.4 L1024.3 831.6Z" fill="#98baba" fill-opacity="0.32"/>
<path d="M988.7 853.9 L983.7 820.3 L1040.6 829.1Z" fill="#98baba" fill-opacity="0.32"/>
<path d="M1007.2 851.5 L1001.4 818.0 L1058.5 825.5Z" fill="#98baba" fill-opacity="0.32"/>
<path d="M1025.7 848.8 L1018.5 815.6 L1075.9 820.6Z" fill="#98baba" fill-opacity="0.32"/>
<path d="M1042.4 845.7 L1033.4 813.0 L1090.9 814.8Z" fill="#98baba" fill-opacity="0.32"/>
<path d="M1060.1 841.3 L1049.6 808.9 L1107.2 808.2Z" fill="#98baba" fill-opacity="0.32"/>
<path d="M1077.4 836.1 L1065.6 804.2 L1123.0 801.0Z" fill="#98baba" fill-opacity="0.32"/>
<path d="M1094.2 830.3 L1081.0 799.0 L1138.2 793.2Z" fill="#98baba" fill-opacity="0.32"/>
<path d="M1110.4 824.1 L1095.5 793.5 L1152.3 784.7Z" fill="#98baba" fill-opacity="0.32"/>
<path d="M1127.3 816.5 L1110.5 786.9 L1166.7 774.6Z" fill="#98baba" fill-opacity="0.32"/>
<path d="M1143.1 808.1 L1124.6 779.6 L1180.0 763.9Z" fill="#98baba" fill-opacity="0.32"/>
<path d="M1157.7 799.0 L1138.0 771.3 L1192.7 753.3Z" fill="#98baba" fill-opacity="0.32"/>
<path d="M1171.6 789.6 L1150.8 762.7 L1204.7 742.5Z" fill="#98baba" fill-opacity="0.32"/>
<path d="M1186.2 779.0 L1164.1 753.1 L1217.1 730.5Z" fill="#98baba" fill-opacity="0.32"/>
<path d="M1199.7 768.0 L1176.5 743.1 L1228.4 718.0Z" fill="#98baba" fill-opacity="0.32"/>
<path d="M1212.3 756.5 L1188.4 732.3 L1239.6 705.8Z" fill="#98baba" fill-opacity="0.32"/>
<path d="M1224.5 744.7 L1200.3 720.8 L1251.0 693.7Z" fill="#98baba" fill-opacity="0.32"/>
<path d="M1236.9 732.5 L1212.3 709.1 L1262.4 680.9Z" fill="#98baba" fill-opacity="0.32"/>
<path d="M1249.3 719.9 L1223.9 697.3 L1273.2 667.5Z" fill="#98baba" fill-opacity="0.32"/>
<path d="M1261.1 707.4 L1234.7 685.9 L1282.6 654.0Z" fill="#98baba" fill-opacity="0.32"/>
<path d="M1272.2 694.5 L1244.8 674.4 L1291.0 640.1Z" fill="#98baba" fill-opacity="0.32"/>
<path d="M1283.6 680.5 L1254.8 662.5 L1298.3 624.8Z" fill="#98baba" fill-opacity="0.32"/>
<path d="M1294.0 665.5 L1263.5 650.4 L1303.2 608.7Z" fill="#98baba" fill-opacity="0.32"/>
<path d="M1302.6 649.4 L1271.1 636.6 L1307.6 592.1Z" fill="#98baba" fill-opacity="0.32"/>
<path d="M1309.4 633.7 L1277.3 622.5 L1311.6 576.2Z" fill="#98baba" fill-opacity="0.32"/>
<path d="M1315.5 617.2 L1283.1 606.8 L1316.0 559.6Z" fill="#98baba" fill-opacity="0.32"/>
<path d="M1320.9 600.9 L1288.3 591.3 L1320.0 543.3Z" fill="#98baba" fill-opacity="0.32"/>
<path d="M1326.1 584.4 L1293.2 575.9 L1323.4 526.9Z" fill="#98baba" fill-opacity="0.32"/>
<path d="M1330.8 567.8 L1297.6 560.7 L1325.7 510.5Z" fill="#98baba" fill-opacity="0.32"/>
<path d="M1334.9 550.8 L1301.4 545.0 L1327.4 493.7Z" fill="#98baba" fill-opacity="0.32"/>
<path d="M1338.2 534.0 L1304.5 529.8 L1328.2 477.3Z" fill="#98baba" fill-opacity="0.32"/>
<path d="M1340.9 516.1 L1307.0 513.5 L1328.2 459.9Z" fill="#98baba" fill-opacity="0.32"/>
<path d="M1342.4 499.1 L1308.5 497.6 L1327.8 443.4Z" fill="#98baba" fill-opacity="0.32"/>
<path d="M1343.1 482.9 L1309.1 481.7 L1328.1 427.3Z" fill="#98baba" fill-opacity="0.32"/>
<path d="M1343.2 478.0 L1309.2 476.6 L1328.6 422.4Z" fill="#98baba" fill-opacity="0.32"/>
<path d="M1478.1 466.6 L1512.0 464.8 L1497.9 520.6Z" fill="#98baba" fill-opacity="0.3"/>
<path d="M1478.7 481.5 L1512.7 479.6 L1498.9 535.5Z" fill="#98baba" fill-opacity="0.3"/>
<path d="M1479.1 496.6 L1513.0 493.5 L1501.0 549.8Z" fill="#98baba" fill-opacity="0.3"/>
<path d="M1479.8 511.8 L1513.4 506.8 L1504.7 563.7Z" fill="#98baba" fill-opacity="0.3"/>
<path d="M1481.7 527.5 L1515.1 520.8 L1509.2 578.1Z" fill="#98baba" fill-opacity="0.3"/>
<path d="M1484.5 542.9 L1517.6 535.2 L1513.5 592.6Z" fill="#98baba" fill-opacity="0.3"/>
<path d="M1487.9 558.7 L1520.8 550.1 L1518.1 607.6Z" fill="#98baba" fill-opacity="0.3"/>
<path d="M1491.5 573.9 L1524.1 564.4 L1523.2 622.0Z" fill="#98baba" fill-opacity="0.3"/>
<path d="M1495.4 589.1 L1527.6 578.1 L1529.1 635.7Z" fill="#98baba" fill-opacity="0.3"/>
<path d="M1499.6 603.4 L1531.2 590.8 L1535.8 648.2Z" fill="#98baba" fill-opacity="0.3"/>
<path d="M1505.0 617.6 L1536.0 603.8 L1542.8 660.9Z" fill="#98baba" fill-opacity="0.3"/>
<path d="M1510.7 630.7 L1541.6 616.5 L1549.2 673.6Z" fill="#98baba" fill-opacity="0.3"/>
<path d="M1516.9 644.3 L1547.7 630.0 L1555.5 687.0Z" fill="#98baba" fill-opacity="0.3"/>
<path d="M1523.0 657.9 L1553.6 643.2 L1562.1 700.1Z" fill="#98baba" fill-opacity="0.3"/>
<path d="M1529.3 671.8 L1559.5 656.2 L1569.6 712.9Z" fill="#98baba" fill-opacity="0.3"/>
<path d="M1536.1 686.4 L1565.4 669.3 L1578.5 725.3Z" fill="#98baba" fill-opacity="0.3"/>
<path d="M1543.3 700.9 L1571.0 681.2 L1589.1 735.8Z" fill="#98baba" fill-opacity="0.3"/>
<path d="M1552.1 715.4 L1577.3 692.6 L1601.7 744.7Z" fill="#98baba" fill-opacity="0.3"/>
<path d="M1563.0 728.3 L1585.9 703.2 L1615.0 752.9Z" fill="#98baba" fill-opacity="0.3"/>
<path d="M1574.6 739.5 L1596.5 713.4 L1627.6 761.8Z" fill="#98baba" fill-opacity="0.3"/>
<path d="M1585.9 749.4 L1607.0 722.7 L1639.6 770.1Z" fill="#98baba" fill-opacity="0.3"/>
<path d="M1598.2 759.3 L1618.7 732.2 L1652.3 778.9Z" fill="#98baba" fill-opacity="0.3"/>
<path d="M1610.6 769.0 L1630.4 741.4 L1665.2 787.3Z" fill="#98baba" fill-opacity="0.3"/>
<path d="M1622.3 777.8 L1641.4 749.6 L1677.3 794.6Z" fill="#98baba" fill-opacity="0.3"/>
<path d="M1634.5 786.5 L1652.8 757.8 L1690.0 801.7Z" fill="#98baba" fill-opacity="0.3"/>
<path d="M1647.9 795.6 L1665.0 766.2 L1703.9 808.6Z" fill="#98baba" fill-opacity="0.3"/>
<path d="M1661.3 804.2 L1676.6 773.8 L1718.0 813.8Z" fill="#98baba" fill-opacity="0.3"/>
<path d="M1675.2 812.3 L1688.1 780.8 L1732.6 817.3Z" fill="#98baba" fill-opacity="0.3"/>
<path d="M1690.4 819.4 L1700.3 786.9 L1747.9 819.2Z" fill="#98baba" fill-opacity="0.3"/>
<path d="M1705.0 824.5 L1712.5 791.3 L1762.4 820.1Z" fill="#98baba" fill-opacity="0.3"/>
<path d="M1719.3 827.8 L1726.1 794.5 L1776.6 822.2Z" fill="#98baba" fill-opacity="0.3"/>
<path d="M1734.5 830.8 L1741.6 797.6 L1791.9 825.6Z" fill="#98baba" fill-opacity="0.3"/>
<path d="M1749.4 834.0 L1756.5 800.8 L1806.8 828.9Z" fill="#98baba" fill-opacity="0.3"/>
<path d="M1764.2 837.2 L1771.1 803.9 L1821.5 831.9Z" fill="#98baba" fill-opacity="0.3"/>
<path d="M1779.9 840.6 L1786.7 807.3 L1837.2 834.9Z" fill="#98baba" fill-opacity="0.3"/>
<path d="M1795.8 843.9 L1802.3 810.6 L1853.0 837.8Z" fill="#98baba" fill-opacity="0.3"/>
<path d="M1811.1 847.1 L1817.2 813.6 L1868.3 840.2Z" fill="#98baba" fill-opacity="0.3"/>
<path d="M1827.3 850.4 L1832.5 816.8 L1884.2 842.0Z" fill="#98baba" fill-opacity="0.3"/>
<path d="M1843.2 853.3 L1847.0 819.5 L1899.8 842.5Z" fill="#98baba" fill-opacity="0.3"/>
<path d="M1858.0 855.4 L1860.3 821.5 L1914.0 842.1Z" fill="#98baba" fill-opacity="0.3"/>
<path d="M1873.8 856.6 L1875.2 822.7 L1929.4 841.9Z" fill="#98baba" fill-opacity="0.3"/>
<path d="M1891.1 857.4 L1892.3 823.4 L1946.6 842.3Z" fill="#98baba" fill-opacity="0.3"/>
<path d="M1480.2 466.5 L1512.2 466.9 L1495.6 518.7Z" fill="#adadcc" fill-opacity="0.3"/>
<path d="M1479.9 489.5 L1511.9 489.9 L1495.3 541.7Z" fill="#adadcc" fill-opacity="0.3"/>
<path d="M1479.8 511.6 L1511.8 512.4 L1494.6 564.0Z" fill="#adadcc" fill-opacity="0.3"/>
<path d="M1479.7 534.3 L1511.6 536.2 L1492.6 587.1Z" fill="#adadcc" fill-opacity="0.3"/>
<path d="M1479.1 555.8 L1510.8 559.8 L1488.4 609.4Z" fill="#adadcc" fill-opacity="0.3"/>
<path d="M1476.8 577.4 L1508.1 583.9 L1481.9 631.6Z" fill="#adadcc" fill-opacity="0.3"/>
<path d="M1472.5 599.3 L1503.3 607.6 L1474.3 653.7Z" fill="#adadcc" fill-opacity="0.3"/>
<path d="M1466.7 621.4 L1497.2 631.2 L1466.2 675.8Z" fill="#adadcc" fill-opacity="0.3"/>
<path d="M1460.6 641.9 L1490.6 653.3 L1457.1 696.2Z" fill="#adadcc" fill-opacity="0.3"/>
<path d="M1453.4 662.1 L1482.6 675.2 L1446.7 716.1Z" fill="#adadcc" fill-opacity="0.3"/>
<path d="M1444.9 682.5 L1473.1 697.6 L1434.4 735.8Z" fill="#adadcc" fill-opacity="0.3"/>
<path d="M1434.6 701.8 L1461.8 718.7 L1420.8 754.4Z" fill="#adadcc" fill-opacity="0.3"/>
<path d="M1422.7 721.0 L1449.6 738.4 L1407.9 773.3Z" fill="#adadcc" fill-opacity="0.3"/>
<path d="M1410.4 740.4 L1437.0 758.2 L1394.8 792.5Z" fill="#adadcc" fill-opacity="0.3"/>
<path d="M1398.0 759.2 L1424.1 777.7 L1381.0 810.9Z" fill="#adadcc" fill-opacity="0.3"/>
<path d="M1386.3 777.0 L1411.3 797.1 L1366.2 827.6Z" fill="#adadcc" fill-opacity="0.3"/>
<path d="M1372.3 794.3 L1396.1 815.7 L1349.5 843.8Z" fill="#adadcc" fill-opacity="0.3"/>
<path d="M1357.4 811.3 L1380.8 833.2 L1333.6 860.2Z" fill="#adadcc" fill-opacity="0.3"/>
<path d="M1342.2 828.3 L1364.5 851.2 L1316.1 876.1Z" fill="#adadcc" fill-opacity="0.3"/>
<path d="M1326.7 844.3 L1347.1 868.9 L1296.9 889.8Z" fill="#adadcc" fill-opacity="0.3"/>
<path d="M1310.6 858.2 L1328.9 884.5 L1277.1 901.1Z" fill="#adadcc" fill-opacity="0.3"/>
<path d="M1292.5 871.0 L1309.4 898.1 L1256.9 912.1Z" fill="#adadcc" fill-opacity="0.3"/>
<path d="M1272.7 883.3 L1289.2 910.7 L1236.4 923.8Z" fill="#adadcc" fill-opacity="0.3"/>
<path d="M1253.7 894.8 L1270.2 922.2 L1217.3 935.2Z" fill="#adadcc" fill-opacity="0.3"/>
<path d="M1234.1 906.6 L1250.3 934.2 L1197.3 946.6Z" fill="#adadcc" fill-opacity="0.3"/>
<path d="M1213.1 918.9 L1229.1 946.6 L1176.0 958.7Z" fill="#adadcc" fill-opacity="0.3"/>
<path d="M1193.8 930.0 L1209.7 957.7 L1156.6 969.7Z" fill="#adadcc" fill-opacity="0.3"/>
<path d="M1177.1 939.5 L1193.0 967.3 L1139.9 979.2Z" fill="#adadcc" fill-opacity="0.3"/>
<path d="M1667.6 945.1 L1653.7 973.9 L1613.7 937.0Z" fill="#adadcc" fill-opacity="0.3"/>
<path d="M1647.4 935.2 L1633.8 964.2 L1593.5 927.7Z" fill="#adadcc" fill-opacity="0.3"/>
<path d="M1626.9 925.2 L1614.4 954.7 L1572.8 919.6Z" fill="#adadcc" fill-opacity="0.3"/>
<path d="M1605.5 916.6 L1593.1 946.1 L1551.4 911.2Z" fill="#adadcc" fill-opacity="0.3"/>
<path d="M1585.8 909.3 L1571.2 937.7 L1532.3 899.7Z" fill="#adadcc" fill-opacity="0.3"/>
<path d="M1566.4 899.8 L1549.1 926.8 L1514.0 885.2Z" fill="#adadcc" fill-opacity="0.3"/>
<path d="M1548.6 889.0 L1529.1 914.4 L1497.6 870.1Z" fill="#adadcc" fill-opacity="0.3"/>
<path d="M1531.2 876.2 L1510.0 900.1 L1481.7 853.7Z" fill="#adadcc" fill-opacity="0.3"/>
<path d="M1514.8 861.8 L1492.5 884.7 L1466.4 837.0Z" fill="#adadcc" fill-opacity="0.3"/>
<path d="M1498.4 846.0 L1475.5 868.3 L1450.7 819.9Z" fill="#adadcc" fill-opacity="0.3"/>
<path d="M1482.4 830.0 L1458.8 851.6 L1435.5 802.4Z" fill="#adadcc" fill-opacity="0.3"/>
<path d="M1467.6 814.7 L1442.6 834.8 L1422.5 784.2Z" fill="#adadcc" fill-opacity="0.3"/>
<path d="M1453.6 798.5 L1426.9 816.2 L1411.5 764.0Z" fill="#adadcc" fill-opacity="0.3"/>
<path d="M1441.5 780.3 L1413.7 796.1 L1401.7 743.1Z" fill="#adadcc" fill-opacity="0.3"/>
<path d="M1430.3 761.4 L1402.0 776.2 L1392.1 722.7Z" fill="#adadcc" fill-opacity="0.3"/>
<path d="M1420.1 741.5 L1391.5 755.8 L1382.6 702.1Z" fill="#adadcc" fill-opacity="0.3"/>
<path d="M1409.9 721.3 L1381.3 735.5 L1372.5 681.8Z" fill="#adadcc" fill-opacity="0.3"/>
<path d="M1400.0 701.7 L1371.1 715.4 L1363.2 661.6Z" fill="#adadcc" fill-opacity="0.3"/>
<path d="M1390.4 682.2 L1361.1 695.1 L1354.9 641.0Z" fill="#adadcc" fill-opacity="0.3"/>
<path d="M1381.0 662.5 L1350.9 673.5 L1348.1 619.2Z" fill="#adadcc" fill-opacity="0.3"/>
<path d="M1373.1 642.2 L1342.3 650.7 L1343.9 596.3Z" fill="#adadcc" fill-opacity="0.3"/>
<path d="M1367.5 621.5 L1336.3 628.6 L1340.3 574.4Z" fill="#adadcc" fill-opacity="0.3"/>
<path d="M1363.4 603.5 L1332.1 610.4 L1336.5 556.1Z" fill="#adadcc" fill-opacity="0.3"/>
<path d="M1168 825 L1168 857 L1242 839.6Z" fill="#474747"/>
<path d="M1186 823.5 L1186 857 L1242 839.6Z" fill="#676767"/>
<path d="M1629.7 822.6 L1629.7 856.2 L1685 838.6Z" fill="#484848"/>
<path d="M954 823 L954 857 L1017 839Z" fill="#9a9a9a" fill-opacity="0.55"/>
<path d="M433 754.5 L1895 754.5 M433 924 L1895 924" stroke="#848484" stroke-width="5.5"/>
<path d="M1243.5 100 L1243.5 515 M1411 100 L1411 517 M1580.5 100 L1580.5 511" stroke="#848484" stroke-width="5.5"/>
<path d="M1243.5 515 C1243.5 650 1100 755.5 965 755.5" fill="none" stroke="#848484" stroke-width="5.5"/>
<path d="M1243.5 515.0 C1244.0 519.0 1243.9 525.8 1246.7 539.0 C1249.5 552.2 1254.7 570.9 1260.5 594.0 C1266.3 617.1 1272.9 650.5 1281.4 677.8 C1289.9 705.1 1298.6 731.4 1311.7 757.6 C1324.8 783.8 1342.8 810.4 1360.0 835.0 C1377.2 859.6 1399.2 886.5 1415.0 905.0 C1430.8 923.5 1445.6 936.0 1454.8 946.0 C1464.0 956.0 1467.5 961.8 1470.0 965.0" fill="none" stroke="#848484" stroke-width="5.5" stroke-linecap="butt"/>
<path d="M1411.0 517.8 C1410.1 524.7 1408.8 543.2 1405.8 559.4 C1402.8 575.6 1398.1 598.8 1393.3 615.0 C1388.5 631.2 1382.2 643.7 1376.7 656.7 C1371.2 669.7 1370.8 676.0 1360.0 692.8 C1349.2 709.6 1325.0 741.4 1311.7 757.6 C1298.4 773.8 1295.3 775.6 1280.0 790.0 C1264.7 804.4 1241.8 828.8 1220.0 844.0 C1198.2 859.2 1172.7 870.7 1149.0 881.0 C1125.3 891.3 1106.3 899.2 1078.0 906.0 C1049.7 912.8 1000.3 919.0 979.0 922.0 C957.7 925.0 954.8 923.7 950.0 924.0" fill="none" stroke="#848484" stroke-width="5.5" stroke-linecap="butt"/>
<path d="M1411.0 517.8 C1413.2 524.7 1419.0 543.2 1423.9 559.4 C1428.8 575.6 1434.6 597.4 1440.6 615.0 C1446.6 632.6 1452.6 648.8 1460.0 665.0 C1467.4 681.2 1476.0 697.0 1485.0 712.0 C1494.0 727.0 1504.5 741.8 1514.0 755.3 C1523.5 768.8 1532.2 781.9 1542.0 793.0 C1551.8 804.1 1561.2 812.3 1573.0 822.0 C1584.8 831.7 1598.8 841.7 1613.0 851.0 C1627.2 860.3 1640.2 869.8 1658.0 878.0 C1675.8 886.2 1698.3 893.5 1720.0 900.0 C1741.7 906.5 1766.3 913.0 1788.0 917.0 C1809.7 921.0 1834.7 922.8 1850.0 924.0 C1865.3 925.2 1875.0 924.4 1880.0 924.5" fill="none" stroke="#848484" stroke-width="5.5" stroke-linecap="butt"/>
<path d="M1580.5 507.0 C1580.3 513.4 1581.9 527.6 1579.4 545.6 C1576.9 563.6 1570.7 594.2 1565.6 615.0 C1560.5 635.8 1555.4 652.1 1548.9 670.6 C1542.4 689.1 1532.5 711.9 1526.7 726.0 C1520.9 740.1 1518.1 744.8 1514.0 755.3 C1509.9 765.8 1507.7 777.0 1502.0 789.0 C1496.3 801.0 1494.5 807.7 1480.0 827.0 C1465.5 846.3 1433.8 885.2 1415.0 905.0 C1396.2 924.8 1377.8 936.8 1367.0 946.0 C1356.2 955.2 1352.8 957.7 1350.0 960.0" fill="none" stroke="#848484" stroke-width="5.5" stroke-linecap="butt"/>
<path d="M1580.5 507.0 C1582.6 514.1 1588.4 534.4 1593.3 549.4 C1598.2 564.4 1601.7 579.1 1610.0 596.7 C1618.3 614.3 1630.8 638.8 1643.3 655.0 C1655.8 671.2 1671.1 683.2 1685.0 693.9 C1698.9 704.5 1710.5 711.0 1726.7 718.9 C1742.9 726.8 1763.5 735.6 1782.0 741.0 C1800.5 746.4 1824.0 748.7 1837.8 751.0 C1851.6 753.3 1854.6 754.2 1865.0 755.0 C1875.4 755.8 1894.2 755.4 1900.0 755.5" fill="none" stroke="#848484" stroke-width="5.5" stroke-linecap="butt"/>
<text x="1152.6" y="680.3" fill="#0000ff" font-size="24.5" text-anchor="middle" font-family="Liberation Sans">0.25</text>
<text x="1217.1" y="608.3" fill="#ff0000" font-size="24.5" text-anchor="middle" font-family="Liberation Sans">0.096</text>
<text x="1241.5" y="564.8" fill="#ff0000" font-size="24.5" text-anchor="middle" font-family="Liberation Sans">0.03</text>
<text x="1251.8" y="516.7" fill="#ff0000" font-size="24.5" text-anchor="middle" font-family="Liberation Sans">0</text>
<text x="1253.7" y="467.0" fill="#ff0000" font-size="24.5" text-anchor="middle" font-family="Liberation Sans">0</text>
<text x="1245.9" y="418.4" fill="#ff0000" font-size="24.5" text-anchor="middle" font-family="Liberation Sans">0</text>
<text x="1232.3" y="372.7" fill="#ff0000" font-size="24.5" text-anchor="middle" font-family="Liberation Sans">0</text>
<text x="1226.4" y="323.8" fill="#ff0000" font-size="24.5" text-anchor="middle" font-family="Liberation Sans">0</text>
<text x="1225.9" y="271.1" fill="#ff0000" font-size="24.5" text-anchor="middle" font-family="Liberation Sans">0.012</text>
<text x="1226.7" y="217.3" fill="#00ff00" font-size="24.5" text-anchor="middle" font-family="Liberation Sans">0.11</text>
<text x="1222.2" y="163.6" fill="#0000ff" font-size="24.5" text-anchor="middle" font-family="Liberation Sans">0.27</text>
<path d="M1164.7 730.7 L1188.1 838.2 L914.6 897.8 L891.1 790.3Z" fill="none" stroke="#0000ff" stroke-width="4.6" stroke-linejoin="miter"/>
<path d="M1279.0 163.0 L1388.6 172.0 L1365.7 451.1 L1256.1 442.1Z" fill="none" stroke="#0000ff" stroke-width="4.6" stroke-linejoin="miter"/>
<path d="M1208.6 696.7 L1243.5 801.0 L978.0 889.9 L943.1 785.5Z" fill="none" stroke="#00ff00" stroke-width="4.6" stroke-linejoin="miter"/>
<path d="M1283.3 218.9 L1392.5 232.3 L1358.4 510.2 L1249.2 496.8Z" fill="none" stroke="#00ff00" stroke-width="4.6" stroke-linejoin="miter"/>
<path d="M1242.6 654.0 L1291.9 752.4 L1041.5 877.7 L992.2 779.4Z" fill="none" stroke="#ff0000" stroke-width="4.6" stroke-linejoin="miter"/>
<path d="M1273.0 607.0 L1333.9 698.6 L1100.7 853.6 L1039.8 761.9Z" fill="none" stroke="#ff0000" stroke-width="4.6" stroke-linejoin="miter"/>
<path d="M1291.0 552.8 L1366.6 632.7 L1163.1 825.1 L1087.6 745.2Z" fill="none" stroke="#ff0000" stroke-width="4.6" stroke-linejoin="miter"/>
<path d="M1299.4 495.8 L1387.6 561.5 L1220.3 786.0 L1132.1 720.3Z" fill="none" stroke="#ff0000" stroke-width="4.6" stroke-linejoin="miter"/>
<path d="M1296.7 438.9 L1394.8 488.7 L1268.1 738.4 L1170.0 688.6Z" fill="none" stroke="#ff0000" stroke-width="4.6" stroke-linejoin="miter"/>
<path d="M1286.7 384.4 L1391.7 417.3 L1307.9 684.5 L1203.0 651.6Z" fill="none" stroke="#ff0000" stroke-width="4.6" stroke-linejoin="miter"/>
<path d="M1282.2 330.0 L1390.0 352.1 L1333.7 626.4 L1225.9 604.3Z" fill="none" stroke="#ff0000" stroke-width="4.6" stroke-linejoin="miter"/>
<path d="M1282.2 274.4 L1390.9 291.0 L1348.6 567.8 L1239.8 551.2Z" fill="none" stroke="#ff0000" stroke-width="4.6" stroke-linejoin="miter"/>
<text x="1190.5" y="647.9" fill="#00ff00" font-size="24.5" text-anchor="middle" font-family="Liberation Sans">0.18</text>
</g></svg>
</body></html>
